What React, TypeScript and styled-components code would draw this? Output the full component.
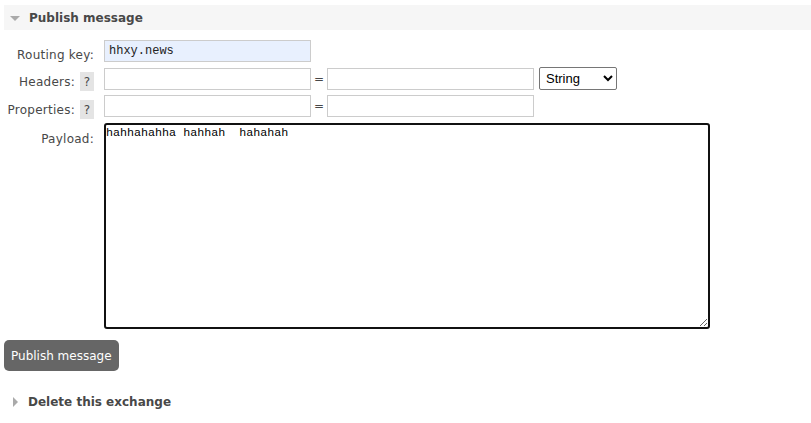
import React from "react";
import styled, { createGlobalStyle } from "styled-components";

const Global = createGlobalStyle`
  html, body { margin: 0; padding: 0; background: #fff; }
  body { font-family: "DejaVu Sans", Verdana, sans-serif; font-size: 12px; color: #484848; }
`;

const Page = styled.div`
  padding: 5px 0 0 4px;
`;

const SectionHeader = styled.div`
  display: flex;
  align-items: center;
  gap: 9px;
  height: 25px;
  padding-left: 6px;
  background: #f6f6f6;
  font-weight: bold;
  font-size: 12px;
  color: #484848;
`;

const Tri = styled.span<{ $open?: boolean }>`
  width: 0;
  height: 0;
  ${(p) =>
    p.$open
      ? `border-left: 5px solid transparent; border-right: 5px solid transparent; border-top: 5px solid #aaa; margin-top: 1px;`
      : `border-top: 5px solid transparent; border-bottom: 5px solid transparent; border-left: 5px solid #aaa; margin-left: 3px; margin-right: 3px;`}
`;

const Form = styled.div`
  display: grid;
  grid-template-columns: 90px auto;
  column-gap: 10px;
  row-gap: 5px;
  margin-top: 10px;
  align-items: start;
`;

const Label = styled.div`
  display: flex;
  justify-content: flex-end;
  align-items: flex-end;
  gap: 5px;
  height: 22px;
  line-height: 14px;
  white-space: nowrap;
  letter-spacing: 0.25px;
  color: #484848;
`;

const Help = styled.span`
  display: inline-flex;
  align-items: center;
  justify-content: center;
  width: 14px;
  height: 19px;
  margin-bottom: -2px;
  background: #e4e4e4;
  color: #484848;
  letter-spacing: 0;
  font-size: 12px;
`;

const Fields = styled.div`
  display: flex;
  align-items: center;
`;

const TextInput = styled.input<{ $filled?: boolean }>`
  box-sizing: border-box;
  width: 207px;
  height: 22px;
  border: 1px solid #ccc;
  background: ${(p) => (p.$filled ? "#e8f0fe" : "#fff")};
  font-family: "Liberation Mono", "Courier New", monospace;
  font-size: 12px;
  color: #222;
  padding: 0 4px;
  outline: none;
`;

const Eq = styled.span`
  width: 16px;
  text-align: center;
  color: #484848;
  font-size: 12px;
`;

const Select = styled.select`
  box-sizing: border-box;
  margin-left: 5px;
  width: 78px;
  height: 23px;
  border: 1px solid #767676;
  border-radius: 2px;
  background: #fff;
  font-family: "Liberation Sans", Arial, sans-serif;
  font-size: 13px;
  color: #000;
  padding: 0 2px;
`;

const Payload = styled.textarea`
  box-sizing: border-box;
  width: 606px;
  height: 206px;
  margin-top: 1px;
  border: 2px solid #111;
  border-radius: 3px;
  outline: none;
  font-family: "Liberation Mono", "Courier New", monospace;
  font-size: 11.7px;
  color: #000;
  padding: 1px 0;
  resize: both;
`;

const PayloadLabel = styled(Label)`
  margin-top: 2px;
`;

const Button = styled.button`
  display: block;
  margin-top: 11px;
  height: 31px;
  padding: 0 7px;
  background: #666;
  color: #fff;
  border: none;
  border-radius: 5px;
  font-family: "DejaVu Sans", Verdana, sans-serif;
  font-size: 12px;
`;

const Collapsed = styled.div`
  display: flex;
  align-items: center;
  gap: 7px;
  margin-top: 24px;
  padding-left: 6px;
  font-weight: bold;
  font-size: 12px;
  color: #484848;
`;

export default function App() {
  return (
    <>
      <Global />
      <Page>
        <SectionHeader>
          <Tri $open />
          <span>Publish message</span>
        </SectionHeader>
        <Form>
          <Label>Routing key:</Label>
          <Fields>
            <TextInput $filled defaultValue="hhxy.news" />
          </Fields>
          <Label>
            Headers: <Help>?</Help>
          </Label>
          <Fields>
            <TextInput />
            <Eq>=</Eq>
            <TextInput />
            <Select defaultValue="String">
              <option>String</option>
              <option>Number</option>
              <option>List</option>
            </Select>
          </Fields>
          <Label>
            Properties: <Help>?</Help>
          </Label>
          <Fields>
            <TextInput />
            <Eq>=</Eq>
            <TextInput />
          </Fields>
          <PayloadLabel>Payload:</PayloadLabel>
          <Payload defaultValue="hahhahahha hahhah  hahahah" />
        </Form>
        <Button>Publish message</Button>
        <Collapsed>
          <Tri />
          <span>Delete this exchange</span>
        </Collapsed>
      </Page>
    </>
  );
}
